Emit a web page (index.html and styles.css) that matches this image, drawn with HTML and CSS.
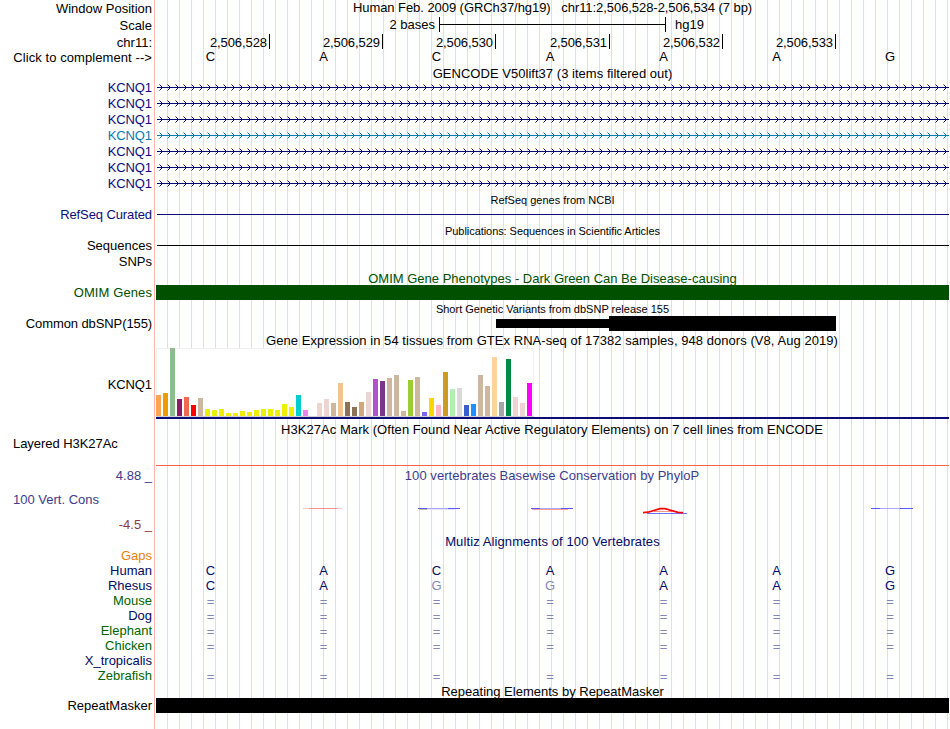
FILE: index.html
```html
<!DOCTYPE html>
<html lang="en">
<head>
    <meta charset="UTF-8">
    <meta name="viewport" content="width=device-width, initial-scale=1.0">
    <title>Human chr11:2,506,528-2,506,534</title>
    <link rel="stylesheet" href="styles.css">
</head>
<body>
    <svg class="defs" width="0" height="0">
        <pattern id="arrows" width="8" height="7" patternUnits="userSpaceOnUse">
            <path class="arrow" d="M3.5 .5l3 3l-3 3"/>
        </pattern>
        <pattern id="arrowsAlt" width="8" height="7" patternUnits="userSpaceOnUse">
            <path class="arrow alt" d="M3.5 .5l3 3l-3 3"/>
        </pattern>
    </svg>
    <main class="browser">
        <!-- position / scale / ruler -->
        <div class="row position"><div class="label">Window Position</div><div class="track title"><span class="t-pos">Human Feb. 2009 (GRCh37/hg19) &nbsp; chr11:2,506,528-2,506,534 (7 bp)</span></div></div>
        <div class="row scale"><div class="label">Scale</div><div class="track"><span class="size">2 bases</span><span class="scale-bar"></span><span class="db">hg19</span></div></div>
        <div class="row ruler"><div class="label">chr11:</div><div class="track cells" id="ruler"></div></div>
        <div class="row bases"><div class="label">Click to complement --&gt;</div><div class="track cells" data-bases="CACAAAG"></div></div>

        <!-- genes -->
        <div class="row head gencode-head"><div class="track title"><span class="t-gencode">GENCODE V50lift37 (3 items filtered out)</span></div></div>
        <div id="genes"></div>
        <div class="row head small"><div class="track title"><span>RefSeq genes from NCBI</span></div></div>
        <div class="row line navy"><div class="label tight">RefSeq Curated</div><div class="track"></div></div>
        <div class="row head small pubs"><div class="track title"><span class="t-pubs">Publications: Sequences in Scientific Articles</span></div></div>
        <div class="row line"><div class="label">Sequences</div><div class="track"></div></div>
        <div class="row snps"><div class="label">SNPs</div></div>
        <div class="row head green omim-head"><div class="track title"><span class="t-omim">OMIM Gene Phenotypes - Dark Green Can Be Disease-causing</span></div></div>
        <div class="row solid green"><div class="label wide">OMIM Genes</div><div class="track"></div></div>
        <div class="row head small dbsnp-head"><div class="track title"><span>Short Genetic Variants from dbSNP release 155</span></div></div>
        <div class="row dbsnp"><div class="label tight">Common dbSNP(155)</div><div class="track"><span class="thin"></span><span class="thick"></span></div></div>

        <!-- expression -->
        <div class="row head gtex-head"><div class="track title"><span class="t-gtex">Gene Expression in 54 tissues from GTEx RNA-seq of 17382 samples, 948 donors (V8, Aug 2019)</span></div></div>
        <div class="row gtex"><div class="label tight">KCNQ1</div><div class="track"><div class="chart" id="chart"></div></div></div>
        <div class="row head h3k-head"><div class="track title"><span class="t-h3k">H3K27Ac Mark (Often Found Near Active Regulatory Elements) on 7 cell lines from ENCODE</span></div></div>
        <div class="row h3k"><div class="label left">Layered H3K27Ac</div><div class="track"></div></div>

        <!-- conservation -->
        <div class="row cons">
            <div class="label">
                <span class="max">4.88 _</span>
                <span class="name">100 Vert. Cons</span>
                <span class="min">-4.5 _</span>
            </div>
            <div class="track">
                <div class="title"><span class="t-cons">100 vertebrates Basewise Conservation by PhyloP</span></div>
                <svg class="wiggle" width="793" height="12" viewBox="156 504 793 12">
                    <path d="M303 508.5H342" stroke="#ff7070" stroke-opacity=".4"/>
                    <path d="M309 508.5H337" stroke="#ff7070" stroke-opacity=".6"/>
                    <path d="M418 508.5H460M531 508.5H573M871 508.5H913" stroke="#a8a8ff"/>
                    <path d="M418 508.5h9M448 508.5h12M531 508.5h9M561 508.5h12M871 508.5h9M900 508.5h13" stroke="#5858ff"/>
                    <path d="M419 509.5h8" stroke="#c0c0a0"/>
                    <path d="M427 509.5h28" stroke="#e4e4f4"/>
                    <path d="M532 509.5H568" stroke="#ff9c9c"/>
                    <path d="M647 513.5H687" stroke="#7070ff"/>
                    <path d="M654 511.5H672" stroke="#ff9090"/>
                    <path d="M643 512.6L648 512.2L660 508.7H665L678 512.4L683 512.6" stroke="#ff0000" stroke-width="1.7" fill="none"/>
                </svg>
            </div>
        </div>

        <!-- alignments -->
        <div class="row head multiz-head"><div class="track title"><span class="t-multiz">Multiz Alignments of 100 Vertebrates</span></div></div>
        <div class="row gaps"><div class="label">Gaps</div></div>
        <div id="species"></div>
        <div class="row head rmsk-head"><div class="track title"><span>Repeating Elements by RepeatMasker</span></div></div>
        <div class="row solid"><div class="label">RepeatMasker</div><div class="track"></div></div>
    </main>
    <script>
        // ruler positions
        const ruler = document.querySelector("#ruler");
        for (let pos = 528; pos <= 533; pos++) {
            ruler.innerHTML += `<span>2,506,${pos}</span>`;
        }

        // gene rows, the fourth transcript has its own color
        const genes = document.querySelector("#genes");
        for (let i = 0; i < 7; i++) {
            const alt = i === 3;
            genes.innerHTML += `<div class="row gene ${alt ? "blue" : "navy"}"><div class="label tight">KCNQ1</div>
                <div class="track"><svg width="793" height="7"><path d="M1 3.5H793" stroke="currentColor"/><rect width="793" height="7" fill="url(#${alt ? "arrowsAlt" : "arrows"})"/></svg></div></div>`;
        }

        // species: name, label color, bases
        const species = [
            ["Human", "dark", "CACAAAG"],
            ["Rhesus", "dark", "CAggAAG"],
            ["Mouse", "forest", "======="],
            ["Dog", "dark", "======="],
            ["Elephant", "forest", "======="],
            ["Chicken", "forest", "======="],
            ["X_tropicalis", "dark", ""],
            ["Zebrafish", "forest", "======="]
        ];
        const speciesBox = document.querySelector("#species");
        species.forEach(([name, color, bases]) => {
            speciesBox.innerHTML += `<div class="row species ${color}"><div class="label">${name}</div><div class="track cells" data-bases="${bases}"></div></div>`;
        });

        // one cell for each base; lower case = mismatch
        document.querySelectorAll("[data-bases]").forEach((track) => {
            for (const base of track.dataset.bases) {
                const cls = base === "=" ? "same" : base === "g" ? "diff" : "base";
                track.innerHTML += `<span class="${cls}">${base.toUpperCase()}</span>`;
            }
        });

        // tissue bars: height, color
        const tissues = [
            [21, "#FFA54F"], [23, "#EE9A00"], [68, "#8FBC8F"], [17, "#8B1C62"], [19, "#EE6A50"], [11, "#FF0000"],
            [18, "#CDB79E"], [7, "#EEEE00"], [6, "#EEEE00"], [7, "#EEEE00"], [3, "#EEEE00"], [3, "#EEEE00"],
            [5, "#EEEE00"], [4, "#EEEE00"], [6, "#EEEE00"], [7, "#EEEE00"], [7, "#EEEE00"], [6, "#EEEE00"],
            [12, "#EEEE00"], [9, "#EEEE00"], [21, "#00CDCD"], [6, "#EE82EE"], [0, "#9AC0CD"], [13, "#EED5D2"],
            [17, "#EED5D2"], [13, "#CDB79E"], [33, "#EEC591"], [14, "#8B7355"], [9, "#8B7355"], [14, "#CDAA7D"],
            [24, "#EED5D2"], [37, "#B452CD"], [35, "#7A378B"], [38, "#CDB79E"], [41, "#CDB79E"], [5, "#CDB79E"],
            [36, "#9ACD32"], [39, "#CDB79E"], [4, "#7A67EE"], [18, "#FFD700"], [11, "#FFB6C1"], [44, "#CD9B1D"],
            [27, "#B4EEB4"], [28, "#D9D9D9"], [11, "#3A5FCD"], [12, "#1E90FF"], [41, "#CDB79E"], [30, "#CDB79E"],
            [59, "#FFD39B"], [14, "#A6A6A6"], [57, "#008B45"], [19, "#EED5D2"], [13, "#EED5D2"], [33, "#FF00FF"]
        ];
        const chart = document.querySelector("#chart");
        tissues.forEach(([height, color]) => {
            chart.innerHTML += `<i style="height:${height}px;background:${color}"></i>`;
        });
    </script>
</body>
</html>
```
FILE: styles.css
```css
* {
    box-sizing: border-box;
}
body {
    margin: 0;
    background-color: #fff;
    color: #000;
    font-family: "Liberation Sans", Arial, sans-serif;
    font-size: 13px;
    line-height: 15px;
}
.defs {
    display: block;
}
.browser {
    width: 949px;
    height: 729px;
    overflow: hidden;
    /* left border of the image + guidelines every 12px */
    background:
        linear-gradient(#ffb4b4, #ffb4b4) 154px 0 / 1px 100% no-repeat,
        repeating-linear-gradient(to right, transparent 0 11px, #dcdcff 11px 12px) 156px 0 / 793px 100% no-repeat;
}
.row {
    display: flex;
    height: 15px;
}
.label {
    width: 156px;
    padding-right: 4px;
    text-align: right;
    white-space: nowrap;
    flex-shrink: 0;
}
.tight {
    letter-spacing: -0.1px;
}
.wide {
    letter-spacing: 0.1px;
}
.track {
    width: 793px;
    height: 100%;
}
.head {
    padding-left: 156px;
}
.title {
    display: flex;
    justify-content: center;
    white-space: nowrap;
}
.small {
    padding-top: 1px;
    font-size: 11px;
}
.cells {
    display: grid;
    grid-template-columns: 114px 113px 113px 114px 113px 113px 113px;
    grid-template-rows: 100%;
}

/* title widths */
.t-pos {
    letter-spacing: -0.06px;
}
.t-gencode {
    letter-spacing: 0.03px;
}
.t-pubs {
    letter-spacing: -0.06px;
}
.t-gtex,
.t-h3k,
.t-cons {
    margin-right: 1px;
    letter-spacing: 0.05px;
}
.t-multiz {
    letter-spacing: 0.1px;
}

/* colors */
.navy {
    color: #0c0c78;
}
.blue {
    color: #0c78b4;
}
.green {
    color: #005000;
}
.dark {
    color: #000a64;
}
.forest {
    color: #006400;
}

/* ruler */
.position {
    height: 17px;
    padding-top: 1px;
}
.position .title {
    margin-top: -1px;
}
.scale {
    height: 17px;
}
.scale .label {
    padding-top: 1px;
}
.scale .track {
    display: flex;
}
.size {
    width: 283px;
    padding-right: 4px;
    text-align: right;
}
.scale-bar {
    width: 227px;
    height: 15px;
    border: solid #000;
    border-width: 0 1px;
    background: linear-gradient(#000, #000) 0 7px / 100% 1px no-repeat;
}
.db {
    padding-left: 9px;
}
.ruler {
    height: 15px;
    line-height: 17px;
}
.ruler .cells span {
    padding-right: 2px;
    border-right: 1px solid #000;
    text-align: right;
    letter-spacing: -0.08px;
}
.bases {
    height: 17px;
}
.bases .label {
    padding-top: 1px;
    letter-spacing: 0.08px;
}
[data-bases] span {
    padding-right: 6px;
    text-align: center;
}
[data-bases] span:first-child,
[data-bases] span:last-child {
    padding-right: 5px;
}

/* genes */
.gencode-head {
    height: 14px;
}
#genes {
    height: 112px;
}
.gene {
    height: 16px;
}
.gene svg {
    display: block;
    margin-top: 4px;
}
.arrow {
    fill: none;
    stroke: #0c0c78;
}
.arrow.alt {
    stroke: #0c78b4;
}
.line .track {
    background: linear-gradient(currentColor, currentColor) 1px 7px / 792px 1px no-repeat;
}
.pubs {
    height: 16px;
    padding-top: 2px;
}
.snps {
    height: 18px;
    padding-top: 1px;
}
.omim-head {
    height: 14px;
}
.solid .track {
    background-color: currentColor;
}
.dbsnp-head {
    height: 16px;
    padding-top: 2px;
}
.dbsnp .track {
    display: flex;
    align-items: center;
}
.thin {
    width: 113px;
    height: 9px;
    margin-left: 340px;
    background-color: #000;
}
.thick {
    width: 227px;
    height: 15px;
    background-color: #000;
}

/* expression */
.gtex-head {
    height: 17px;
    padding-top: 2px;
}
.gtex {
    height: 71px;
}
.gtex .label {
    padding-top: 29px;
}
.gtex .track {
    border-bottom: 2px solid #0c0c78;
}
.chart {
    display: flex;
    align-items: flex-end;
    gap: 2px;
    width: 378px;
    height: 69px;
    background-color: #fff;
    border-bottom: 1px solid #d0d0d0;
    box-shadow: inset 0 1px #f0f0f0, inset 1px 0 #f0f0f0, inset -1px 0 #f0f0f0;
}
.chart i {
    width: 5px;
}
.h3k-head {
    height: 17px;
    padding-top: 3px;
}
.h3k {
    height: 30px;
}
.label.left {
    padding-left: 13px;
    text-align: left;
    letter-spacing: -0.05px;
}
.h3k .track {
    border-bottom: 1px solid #ff6347;
}

/* conservation */
.cons {
    height: 68px;
    color: #3c3c8c;
}
.cons .label {
    display: flex;
    flex-direction: column;
    padding-top: 2px;
}
.name {
    margin-top: 9px;
    padding-left: 13px;
    text-align: left;
}
.min {
    margin-top: 10px;
    color: #8c3c3c;
}
.cons .title {
    padding-top: 2px;
}
.wiggle {
    display: block;
    margin-top: 21px;
}

/* alignments */
.multiz-head {
    height: 14px;
    color: #000a64;
}
.gaps {
    color: #e6820a;
}
.species .cells {
    color: #000a64;
}
.species .same,
.species .diff {
    color: #8288b4;
}
.species .same {
    padding-top: 1px;
}
.rmsk-head {
    height: 15px;
    padding-top: 1px;
}
```
